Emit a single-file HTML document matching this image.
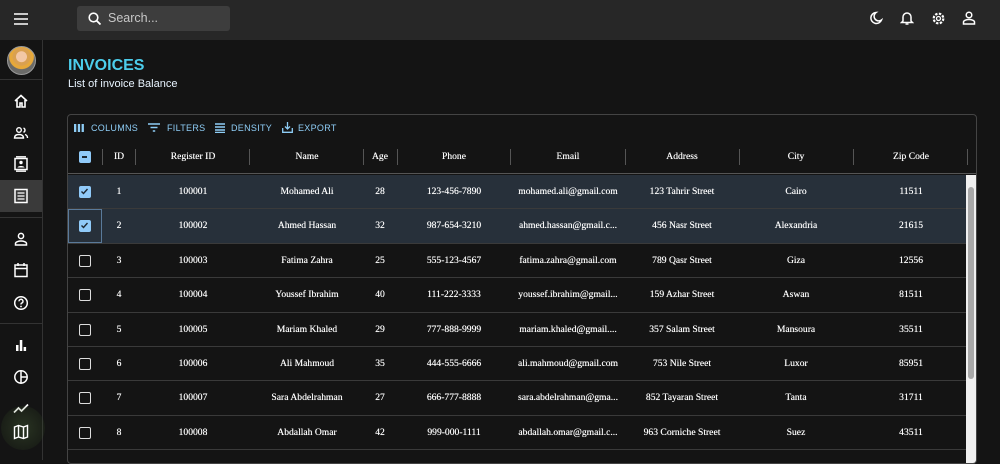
<!DOCTYPE html>
<html><head><meta charset="utf-8"><style>
*{box-sizing:border-box;margin:0;padding:0}
body{width:1000px;height:460px;overflow:hidden;background:#141414;font-family:"Liberation Sans",sans-serif;color:#fff;position:relative}
.top{position:absolute;left:0;top:0;width:1000px;height:40px;background:#272727}
.search{position:absolute;left:77px;top:6px;width:153px;height:25px;background:#3d3d3d;border-radius:3px;color:#c8c8c8;font-size:12.5px;line-height:25px;padding-left:31px}
.side{position:absolute;left:0;top:40px;width:43px;height:420px;background:#141414;border-right:1px solid #333}
.ic{position:absolute;left:13px;width:16px;height:16px}
.hr{position:absolute;left:0;width:42px;height:1px;background:#333}
h1{position:absolute;left:68px;top:57px;font-size:16px;font-weight:bold;color:#4cceec}
.sub{position:absolute;left:68px;top:78px;font-size:11px;color:#e8f4ff}
.grid{position:absolute;left:67px;top:114px;width:910px;height:350px;border:1px solid #444;border-radius:4px;overflow:hidden}
.tb{position:absolute;top:8px;font-size:9px;color:#8ecdf6;letter-spacing:.3px}
.hd{position:absolute;top:26px;left:0;width:908px;height:33px;border-bottom:1px solid #555}
.t{position:absolute;font-family:"Liberation Serif",serif;font-size:9.6px;transform:translateX(-50%);white-space:nowrap;text-shadow:0 0 .4px #fff}
.sep{position:absolute;top:8px;width:1px;height:16px;background:#555}
.row{position:absolute;left:0;width:898px;height:34.4px;border-bottom:1px solid #3a3a3a}
.sel{background:#27303a}
.cb{position:absolute;left:11px;width:12px;height:12px;border:1.5px solid #ddd;border-radius:2px}
.cbc{background:#90caf9;border-color:#90caf9}
.sb{position:absolute;left:898px;top:60px;width:10px;height:290px;background:#f0f0f0}
</style></head><body>
<div class="top">
<svg style="position:absolute;left:14px;top:13px" width="14" height="12"><path d="M0 1h14M0 6h14M0 11h14" stroke="#fff" stroke-width="1.6"/></svg>
<div class="search">Search...</div>
<svg style="position:absolute;left:88px;top:12px" width="13" height="13"><circle cx="5.5" cy="5.5" r="4.3" fill="none" stroke="#fff" stroke-width="1.6"/><path d="M8.7 8.7L12.5 12.5" stroke="#fff" stroke-width="1.8"/></svg>
<svg style="position:absolute;left:869px;top:11px" width="14" height="14"><path d="M7 1.5A5.5 5.5 0 1 0 12.5 9 4.5 4.5 0 0 1 7 1.5z" fill="none" stroke="#fff" stroke-width="1.5"/></svg>
<svg style="position:absolute;left:900px;top:10px" width="14" height="16"><path d="M3 11V7a4 4 0 0 1 8 0v4l1.5 1.5h-11z" fill="none" stroke="#fff" stroke-width="1.5"/><path d="M5.5 14h3" stroke="#fff" stroke-width="1.5"/></svg>
<svg style="position:absolute;left:931px;top:11px" width="15" height="15"><circle cx="7.5" cy="7.5" r="4.8" fill="none" stroke="#fff" stroke-width="2.2" stroke-dasharray="2.4 1.4"/><circle cx="7.5" cy="7.5" r="2" fill="none" stroke="#fff" stroke-width="1.3"/></svg>
<svg style="position:absolute;left:962px;top:11px" width="14" height="14"><circle cx="7" cy="4" r="2.8" fill="none" stroke="#fff" stroke-width="1.5"/><path d="M1.5 13v-2c0-1.5 3-2.5 5.5-2.5s5.5 1 5.5 2.5v2z" fill="none" stroke="#fff" stroke-width="1.5"/></svg>
</div>
<div class="side">
<div style="position:absolute;left:7px;top:6px;width:29px;height:29px;border-radius:50%;background:radial-gradient(circle at 50% 36%,#f2c7a5 0 24%,#d9a050 26% 40%,#e6a83a 42% 55%,#6a6a68 58%);border:1px solid #999"></div>
<div class="hr" style="top:39px"></div>
<svg class="ic" style="top:53px" viewBox="0 0 16 16"><path d="M2 8L8 2.5 14 8M4 7v7h3v-4h2v4h3V7" fill="none" stroke="#fff" stroke-width="1.6"/></svg>
<svg class="ic" style="top:85px" viewBox="0 0 16 16"><circle cx="6" cy="5" r="2.3" fill="none" stroke="#fff" stroke-width="1.4"/><path d="M1.5 13c0-2.5 2-3.5 4.5-3.5s4.5 1 4.5 3.5zM10.5 3a2.3 2.3 0 0 1 0 4.3M12 9.5c1.5.4 2.5 1.5 2.5 3.5" fill="none" stroke="#fff" stroke-width="1.4"/></svg>
<svg class="ic" style="top:116px" viewBox="0 0 16 16"><rect x="2" y="2.5" width="12" height="11" fill="none" stroke="#fff" stroke-width="1.5"/><path d="M3 0.8h10M3 15.2h10" stroke="#fff" stroke-width="1.4"/><circle cx="8" cy="6.5" r="1.7" fill="#fff"/><path d="M4.5 11.5c.5-2 6.5-2 7 0z" fill="#fff"/></svg>
<div style="position:absolute;left:0;top:140px;width:42px;height:32px;background:#3a3a3a"></div>
<svg class="ic" style="top:148px" viewBox="0 0 16 16"><rect x="2" y="1.5" width="12" height="13" fill="none" stroke="#fff" stroke-width="1.5"/><path d="M4.5 5h7M4.5 8h7M4.5 11h7" stroke="#fff" stroke-width="1.3"/></svg>
<div class="hr" style="top:177px"></div>
<svg class="ic" style="top:191px" viewBox="0 0 16 16"><circle cx="8" cy="5" r="2.6" fill="none" stroke="#fff" stroke-width="1.5"/><path d="M2.5 14v-1.5c0-1.5 3-2.5 5.5-2.5s5.5 1 5.5 2.5V14z" fill="none" stroke="#fff" stroke-width="1.5"/></svg>
<svg class="ic" style="top:222px" viewBox="0 0 16 16"><rect x="2" y="3" width="12" height="11.5" fill="none" stroke="#fff" stroke-width="1.5"/><path d="M2 6.5h12M5 1v3M11 1v3" stroke="#fff" stroke-width="1.5"/></svg>
<svg class="ic" style="top:255px" viewBox="0 0 16 16"><circle cx="8" cy="8" r="6.3" fill="none" stroke="#fff" stroke-width="1.5"/><path d="M6 6.3a2 2 0 1 1 2.5 1.9c-.5.2-.5.6-.5 1.3" fill="none" stroke="#fff" stroke-width="1.4"/><circle cx="8" cy="11.5" r=".9" fill="#fff"/></svg>
<div class="hr" style="top:283px"></div>
<svg class="ic" style="top:297px" viewBox="0 0 16 16"><path d="M3 8v6h2.5V8zM6.8 3v11h2.5V3zM10.6 10v4h2.5v-4z" fill="#fff"/></svg>
<svg class="ic" style="top:329px" viewBox="0 0 16 16"><circle cx="8" cy="8" r="6.2" fill="none" stroke="#fff" stroke-width="1.5"/><path d="M8 1.8v12.4M8 8h6" stroke="#fff" stroke-width="1.5"/></svg>
<svg class="ic" style="top:360px" viewBox="0 0 16 16"><path d="M1 12.5l4.5-4.5 3 3L15 4.5" fill="none" stroke="#fff" stroke-width="1.7"/></svg>
<div style="position:absolute;left:1px;top:366px;width:44px;height:44px;border-radius:50%;background:radial-gradient(circle,rgba(80,110,60,.35),rgba(60,90,40,.15) 70%,transparent 72%)"></div>
<svg class="ic" style="top:384px" viewBox="0 0 16 16"><path d="M1.5 3l4-1.5 5 1.5 4-1.5v11.5l-4 1.5-5-1.5-4 1.5zM5.5 1.5v11.5M10.5 3v11.5" fill="none" stroke="#fff" stroke-width="1.4"/></svg>
</div>
<h1>INVOICES</h1>
<div class="sub">List of invoice Balance</div>
<div class="grid">
<svg style="position:absolute;left:6px;top:9px" width="10" height="8"><path d="M0 0h2.3v8H0zM3.8 0h2.3v8H3.8zM7.6 0h2.3v8H7.6z" fill="#8ecdf6"/></svg>
<div class="tb" style="left:23px">COLUMNS</div>
<svg style="position:absolute;left:80px;top:8px" width="12" height="9"><path d="M0 1h12M2.5 4.5h7M4.8 8h2.4" stroke="#8ecdf6" stroke-width="1.5"/></svg>
<div class="tb" style="left:99px">FILTERS</div>
<svg style="position:absolute;left:147px;top:8px" width="10" height="10"><path d="M0 1h10M0 4h10M0 7h10M0 9.5h10" stroke="#8ecdf6" stroke-width="1.4"/></svg>
<div class="tb" style="left:163px">DENSITY</div>
<svg style="position:absolute;left:214px;top:7px" width="11" height="11"><path d="M5.5 0v6.5M3 4.5l2.5 2.5L8 4.5M.7 6v4.3h9.6V6" fill="none" stroke="#8ecdf6" stroke-width="1.3"/></svg>
<div class="tb" style="left:230px">EXPORT</div>
<div class="hd">
<div class="cb cbc" style="top:10px"><div style="position:absolute;left:2px;top:4px;width:5px;height:1.6px;background:#1d2833"></div></div>
<div class="sep" style="left:34px"></div><div class="sep" style="left:67px"></div><div class="sep" style="left:181px"></div><div class="sep" style="left:295px"></div><div class="sep" style="left:329px"></div><div class="sep" style="left:442px"></div><div class="sep" style="left:557px"></div><div class="sep" style="left:671px"></div><div class="sep" style="left:785px"></div><div class="sep" style="left:899px"></div>
<div class="t" style="left:51px;top:10px">ID</div><div class="t" style="left:125px;top:10px">Register ID</div><div class="t" style="left:239px;top:10px">Name</div><div class="t" style="left:312px;top:10px">Age</div><div class="t" style="left:386px;top:10px">Phone</div><div class="t" style="left:500px;top:10px">Email</div><div class="t" style="left:614px;top:10px">Address</div><div class="t" style="left:728px;top:10px">City</div><div class="t" style="left:843px;top:10px">Zip Code</div>
</div>
<div id="rows"></div>
<div class="sb"><div style="position:absolute;left:2px;top:12px;width:6px;height:192px;background:#a8a8a8;border-radius:3px"></div></div>
</div>
<script>
var d=[["1","100001","Mohamed Ali","28","123-456-7890","mohamed.ali@gmail.com","123 Tahrir Street","Cairo","11511"],
["2","100002","Ahmed Hassan","32","987-654-3210","ahmed.hassan@gmail.c...","456 Nasr Street","Alexandria","21615"],
["3","100003","Fatima Zahra","25","555-123-4567","fatima.zahra@gmail.com","789 Qasr Street","Giza","12556"],
["4","100004","Youssef Ibrahim","40","111-222-3333","youssef.ibrahim@gmail...","159 Azhar Street","Aswan","81511"],
["5","100005","Mariam Khaled","29","777-888-9999","mariam.khaled@gmail....","357 Salam Street","Mansoura","35511"],
["6","100006","Ali Mahmoud","35","444-555-6666","ali.mahmoud@gmail.com","753 Nile Street","Luxor","85951"],
["7","100007","Sara Abdelrahman","27","666-777-8888","sara.abdelrahman@gma...","852 Tayaran Street","Tanta","31711"],
["8","100008","Abdallah Omar","42","999-000-1111","abdallah.omar@gmail.c...","963 Corniche Street","Suez","43511"]];
var xs=[51,125,239,312,386,500,614,728,843],h="";
d.forEach(function(r,i){var top=60+i*34.4;h+='<div class="row'+(i<2?' sel':'')+'" style="top:'+top+'px">';
h+='<div class="cb'+(i<2?' cbc':'')+'" style="top:11px">'+(i<2?'<svg width="9" height="9" style="position:absolute;left:0;top:0"><path d="M1.5 4.5l2 2 4-4.5" fill="none" stroke="#1d2833" stroke-width="1.4"/></svg>':'')+'</div>';
if(i==1)h+='<div style="position:absolute;left:0;top:0;width:34px;height:34px;border:1px solid #5a7a9a"></div>';
r.forEach(function(c,j){h+='<div class="t" style="left:'+xs[j]+'px;top:11px">'+c+'</div>'});h+='</div>'});
document.getElementById('rows').innerHTML=h;
</script>
</body></html>
